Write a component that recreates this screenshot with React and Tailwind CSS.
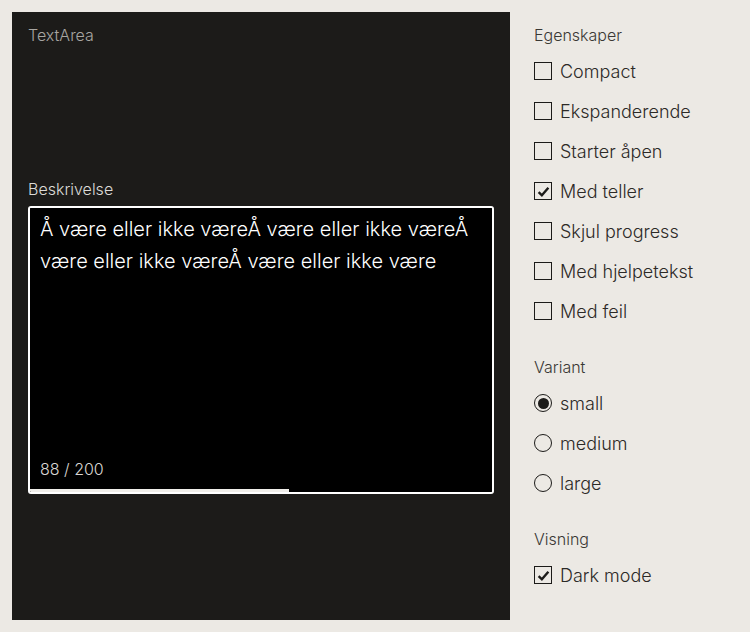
import React, { useState } from 'react';

const font = { fontFamily: 'Inter, "Noto Sans", sans-serif' };

function Checkbox({ label, checked }) {
  return (
    <label className="flex items-center h-10 gap-2 text-[18px] text-[#2c2a27] font-light">
      <span className="w-[18px] h-[18px] border-[1.5px] border-[#1c1b19] flex items-center justify-center bg-transparent">
        {checked && (
          <svg width="13" height="13" viewBox="0 0 12 12">
            <path d="M1.5 6.5 L4.5 9.5 L10.5 2.5" fill="none" stroke="#1c1b19" strokeWidth="2.2" />
          </svg>
        )}
      </span>
      {label}
    </label>
  );
}

function Radio({ label, checked }) {
  return (
    <label className="flex items-center h-10 gap-2 text-[18px] text-[#2c2a27] font-light">
      <span className="w-[18px] h-[18px] rounded-full border-[1.5px] border-[#1c1b19] flex items-center justify-center">
        {checked && <span className="w-[11px] h-[11px] rounded-full bg-[#1c1b19]" />}
      </span>
      {label}
    </label>
  );
}

export default function App() {
  const [text] = useState('Å være eller ikke væreÅ være eller ikke væreÅ være eller ikke væreÅ være eller ikke være');

  return (
    <div className="w-[750px] h-[632px] bg-[#ece9e4] flex p-3 gap-6" style={font}>
      {/* Preview */}
      <div className="w-[498px] h-[608px] bg-[#1c1b19] px-4 pt-[13px] flex flex-col">
        <div className="text-[16px] text-[#a8a6a2] font-light leading-5">TextArea</div>
        <div className="mt-[134px] text-[16px] text-[#dddbd8] font-light leading-5">Beskrivelse</div>
        <div className="mt-[7px] w-[466px] h-[288px] border-2 border-white rounded-[3px] bg-black flex flex-col overflow-hidden">
          <textarea
            readOnly
            value={text}
            className="flex-1 resize-none bg-black text-white text-[20px] font-light leading-[32px] px-[10px] pt-[5px] outline-none"
            style={font}
          />
          <div className="px-[10px] text-[16px] text-[#d8d6d3] font-light leading-5 pb-[10px]">88 / 200</div>
          <div className="h-[3px] bg-black">
            <div className="h-[3px] bg-[#f0eeea]" style={{ width: '56%' }} />
          </div>
        </div>
      </div>

      {/* Controls */}
      <div className="flex flex-col pt-[13px]">
        <div className="text-[16px] text-[#3a3834] font-light leading-5 mb-[6px]">Egenskaper</div>
        <Checkbox label="Compact" />
        <Checkbox label="Ekspanderende" />
        <Checkbox label="Starter åpen" />
        <Checkbox label="Med teller" checked />
        <Checkbox label="Skjul progress" />
        <Checkbox label="Med hjelpetekst" />
        <Checkbox label="Med feil" />
        <div className="text-[16px] text-[#3a3834] font-light leading-5 mt-[26px] mb-[6px]">Variant</div>
        <Radio label="small" checked />
        <Radio label="medium" />
        <Radio label="large" />
        <div className="text-[16px] text-[#3a3834] font-light leading-5 mt-[26px] mb-[6px]">Visning</div>
        <Checkbox label="Dark mode" checked />
      </div>
    </div>
  );
}
